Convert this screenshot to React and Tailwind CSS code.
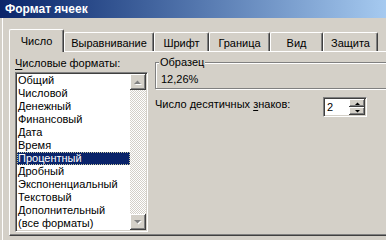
// Excel "Формат ячеек" dialog, Число tab

const items = [
    "Общий",
    "Числовой",
    "Денежный",
    "Финансовый",
    "Дата",
    "Время",
    "Процентный",
    "Дробный",
    "Экспоненциальный",
    "Текстовый",
    "Дополнительный",
    "(все форматы)",
];

const tabs = [
    { label: "Число", cls: "w-[55px]", active: true },
    { label: "Выравнивание", cls: "w-[90px]" },
    { label: "Шрифт", cls: "w-[55px]" },
    { label: "Граница", cls: "w-[61px]" },
    { label: "Вид", cls: "w-[53px]" },
    { label: "Защита", cls: "w-[55px]" },
];

const raised = "bg-[#d4d0c8] shadow-[inset_-1px_-1px_#404040,inset_1px_1px_#fff,inset_-2px_-2px_#808080]";
const sunken = "border border-t-[#808080] border-l-[#808080] border-b-white border-r-white shadow-[inset_1px_1px_#404040,inset_-1px_-1px_#d4d0c8] p-px";

function Arrow({ up, disabled, small }) {
    const pts = small
        ? (up ? "0,3 5,3 2.5,0.5" : "0,0 5,0 2.5,2.5")
        : (up ? "0,4 7,4 3.5,0.5" : "0,0 7,0 3.5,3.5");
    const w = small ? 5 : 7;
    const h = small ? 3 : 4;
    if (disabled) {
        return (
            <svg width={w + 1} height={h + 1} viewBox={`0 0 ${w + 1} ${h + 1}`}>
                <polygon points={pts} fill="#fff" transform="translate(1,1)" />
                <polygon points={pts} fill="#808080" />
            </svg>
        );
    }
    return (
        <svg width={w} height={h} viewBox={`0 0 ${w} ${h}`}>
            <polygon points={pts} fill="#000" />
        </svg>
    );
}

function Tab({ label, cls, active }) {
    if (active) {
        return (
            <div className={`${cls} h-[23px] -mb-px relative z-10 bg-[#d4d0c8] border-l border-t border-white border-r border-r-[#404040] shadow-[inset_-1px_0_#808080] rounded-tl-[2px] rounded-tr-[2px] flex items-center justify-center pt-px`}>
                {label}
            </div>
        );
    }
    return (
        <div className={`${cls} h-[19px] bg-[#d4d0c8] border-l border-t border-white border-r border-r-[#404040] shadow-[inset_-1px_0_#808080] rounded-tl-[2px] rounded-tr-[2px] flex items-center justify-center pt-[2px]`}>
            {label}
        </div>
    );
}

function FormatList() {
    return (
        <div className={`w-[133px] h-[160px] bg-white flex ${sunken}`}>
            <div className="flex-1 flex flex-col">
                {items.map((it) => (
                    <div
                        key={it}
                        className={
                            it === "Процентный"
                                ? "h-[13px] leading-[13px] pl-px bg-[#0a246a] text-white outline-1 outline-dotted outline-[#c8c8a0] -outline-offset-1 whitespace-nowrap"
                                : "h-[13px] leading-[13px] pl-px whitespace-nowrap"
                        }
                    >
                        {it}
                    </div>
                ))}
            </div>
            <div className="w-[16px] flex flex-col bg-[repeating-conic-gradient(#fff_0_25%,#d4d0c8_0_50%)] bg-[length:2px_2px]">
                <div className={`h-[16px] flex items-center justify-center ${raised}`}>
                    <Arrow up disabled />
                </div>
                <div className="flex-1" />
                <div className={`h-[16px] flex items-center justify-center ${raised}`}>
                    <Arrow disabled />
                </div>
            </div>
        </div>
    );
}

export default function App() {
    return (
        <div className="w-[386px] h-[240px] overflow-hidden bg-[#d4d0c8] font-['Liberation_Sans',sans-serif] text-[11px] text-black">
            <div className="h-[18px] bg-gradient-to-r from-[#0a246a] to-[#a6caf0] flex items-center pl-[5px] text-white font-bold text-[12px]">
                Формат ячеек
            </div>
            <div className="flex h-[222px]">
                <div className="w-[2px] shrink-0" />
                <div className="w-px bg-white shrink-0" />
                <div className="flex-1 pl-[6px] pt-[11px] flex flex-col">
                    <div className="h-[22px] flex items-end">
                        {tabs.map((t) => (
                            <Tab key={t.label} {...t} />
                        ))}
                    </div>
                    <div className="w-[420px] h-[185px] border-l border-t border-white border-b border-b-[#404040] shadow-[inset_0_-1px_#808080] flex pl-[5px] pt-[5px]">
                        <div className="flex flex-col shrink-0">
                            <div className="h-[13px] leading-[13px] whitespace-nowrap">
                                <span className="underline underline-offset-2">Ч</span>исловые форматы:
                            </div>
                            <div className="mt-[2px]">
                                <FormatList />
                            </div>
                        </div>
                        <div className="ml-[7px] w-[260px] shrink-0 flex flex-col">
                            <div className="mt-[5px] h-[27px] border border-[#808080] shadow-[inset_1px_1px_#fff,1px_1px_#fff] pl-[3px]">
                                <div className="-mt-[7px] w-fit px-px bg-[#d4d0c8] leading-[13px]">Образец</div>
                                <div className="mt-[4px] pl-[2px] leading-[13px]">12,26%</div>
                            </div>
                            <div className="mt-[8px] flex items-start">
                                <div className="w-[168px] mt-px leading-[13px] whitespace-nowrap">
                                    Число десятичных <span className="underline underline-offset-2">з</span>наков:
                                </div>
                                <div className={`w-[44px] h-[20px] bg-white flex ${sunken}`}>
                                    <div className="flex-1 pl-[2px] leading-[16px]">2</div>
                                    <div className="w-[16px] flex flex-col">
                                        <div className={`h-[8px] flex items-center justify-center ${raised}`}>
                                            <Arrow up small />
                                        </div>
                                        <div className={`h-[8px] flex items-center justify-center ${raised}`}>
                                            <Arrow small />
                                        </div>
                                    </div>
                                </div>
                            </div>
                        </div>
                    </div>
                </div>
            </div>
        </div>
    );
}
